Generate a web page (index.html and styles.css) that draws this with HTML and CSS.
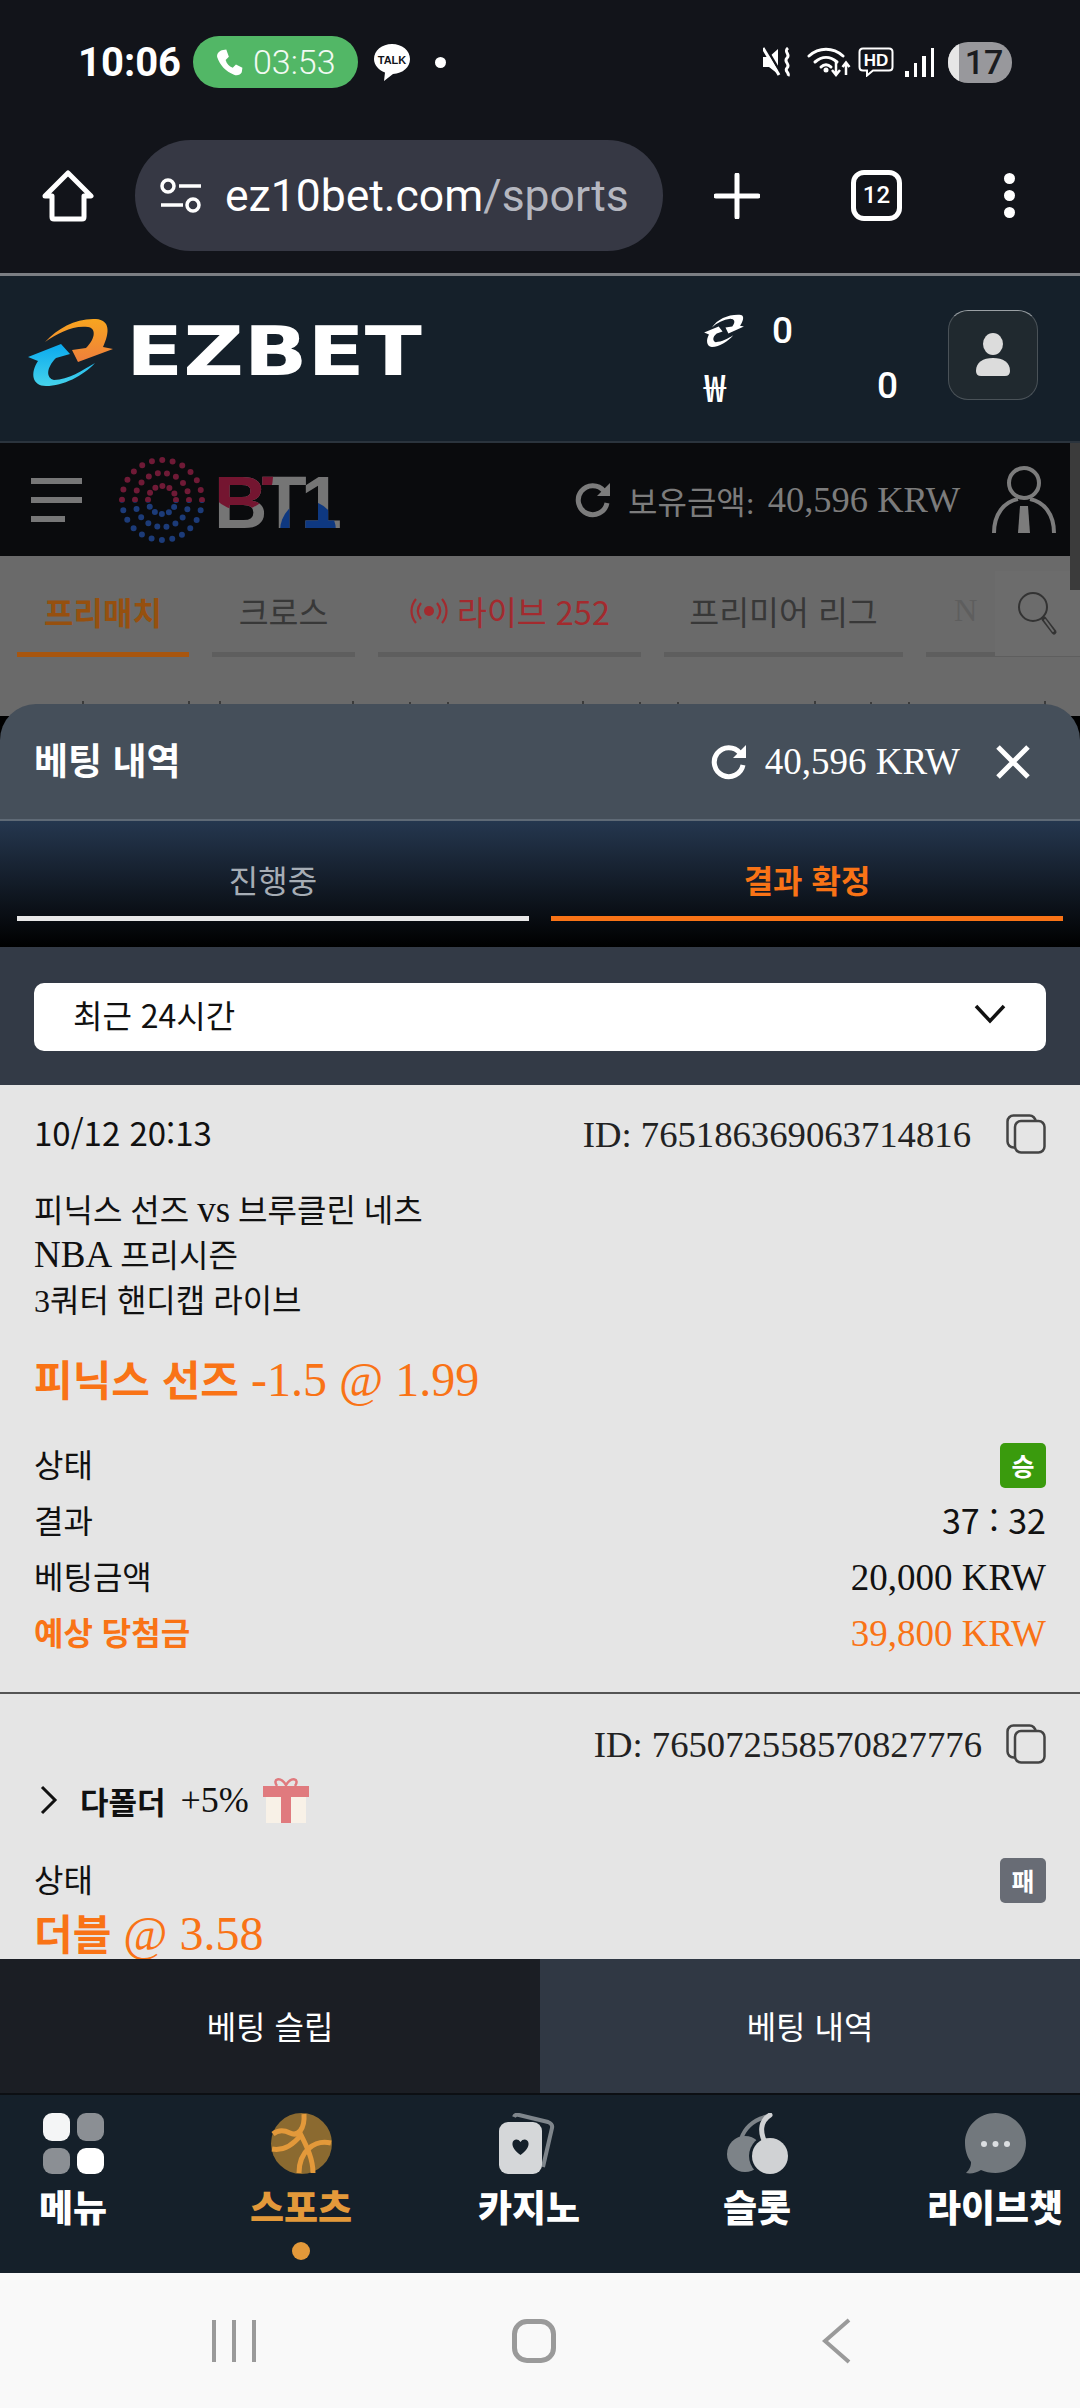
FILE: index.html
```html
<!DOCTYPE html>
<html lang="ko">
<head>
  <meta charset="UTF-8">
  <meta name="viewport" content="width=device-width, initial-scale=1.0">
  <title>EZBET - 베팅 내역</title>
  <link rel="stylesheet" href="styles.css">
</head>
<body>
<div class="phone">

  <!-- Android status bar -->
  <div class="status">
    <div class="status-left">
      <span class="clock">10:06</span>
      <span class="call-pill">
        <svg class="call-icon" viewBox="0 0 24 24"><path d="M6 2.5 L9.5 2 L11.5 7.5 L9 10 C10 13 11.5 14.800 14.500 16 L17 13.500 L22 16 L21.500 19.500 C20.500 21.500 18 22.500 15.500 21.500 C9 19 4.500 14 2.500 8 C2 5.500 3.500 3.500 6 2.500Z" fill="#fff"/></svg>
        <span>03:53</span>
      </span>
      <svg class="talk-icon" viewBox="0 0 38 38"><path d="M19 1 C29 1 37 7.500 37 16 C37 24 30 30.500 20 31 L11 38 L12 29.500 C5.500 27 1 22 1 16 C1 7.500 9 1 19 1Z" fill="#fff"/><text x="19" y="20.500" text-anchor="middle" class="talk-text">TALK</text></svg>
      <span class="status-dot"></span>
    </div>
    <div class="status-right">
      <svg class="mute-icon" viewBox="0 0 30 30"><path d="M0 10 H6 L15 2 V27 L6 20 H0Z" fill="#fff"/><path d="M3 1 L19 28" stroke="#12141a" stroke-width="2.500"/><path d="M0 1 L16 28" stroke="#fff" stroke-width="3"/><path d="M25 1 C20 5 28 7 24 11 C20 15 28 17 24 21 C21 24 27 26 25 29" fill="none" stroke="#fff" stroke-width="3"/></svg>
      <svg class="wifi-icon" viewBox="0 0 44 30"><g fill="none" stroke="#fff" stroke-width="3" stroke-linecap="round"><path d="M2 9 C12 0 26 0 36 9"/><path d="M8 15 C15 9 23 9 30 15"/><path d="M14 20 C17 17 21 17 24 20"/></g><circle cx="19" cy="23" r="2.500" fill="#fff"/><path d="M29 14 V27 M25 23 L29 28 L33 23 M39 28 V17 M35.500 20 L39 15.500 L42.500 20" fill="none" stroke="#fff" stroke-width="2.500"/></svg>
      <svg class="hd-icon" viewBox="0 0 36 30"><path d="M5 1.500 H31 Q34.500 1.500 34.500 5 V20 Q34.500 23.500 31 23.500 H15 L9 28.500 V23.500 H5 Q1.500 23.500 1.500 20 V5 Q1.500 1.500 5 1.500Z" fill="none" stroke="#fff" stroke-width="2"/><text x="18" y="18.500" text-anchor="middle" class="hd-text">HD</text></svg>
      <div class="signal"><i class="s1"></i><i class="s2"></i><i class="s3"></i><i class="s4"></i></div>
      <div class="battery"><span class="battery-fill"></span><span class="battery-num">17</span></div>
    </div>
  </div>

  <!-- Browser toolbar -->
  <div class="browser">
    <svg class="home-icon" viewBox="0 0 52 52"><path d="M26 3 L49 26 H42 V47 Q42 49 40 49 H12 Q10 49 10 47 V26 H3Z" fill="none" stroke="#fff" stroke-width="5" stroke-linejoin="round"/></svg>
    <div class="url-pill">
      <svg class="tune-icon" viewBox="0 0 42 36"><g fill="none" stroke="#fff" stroke-width="3.500"><circle cx="8" cy="8" r="6"/><circle cx="33" cy="27" r="6"/><path d="M19 8 H41 M1 27 H23"/></g></svg>
      <span class="url-text">ez10bet.com<span class="url-path">/sports</span></span>
    </div>
    <svg class="plus-icon" viewBox="0 0 46 46"><path d="M23 2 V44 M2 23 H44" stroke="#fff" stroke-width="5" stroke-linecap="round"/></svg>
    <div class="tab-count">12</div>
    <div class="kebab"><i></i><i></i><i></i></div>
  </div>

  <!-- Site header -->
  <div class="site-head">
    <div class="brand">
      <svg class="brand-mark" viewBox="0 0 85 68">
        <defs>
          <linearGradient id="ezOrange" x1="0" y1="0" x2="0" y2="1"><stop offset="0" stop-color="#f8a51f"/><stop offset="1" stop-color="#ee7f3c"/></linearGradient>
          <linearGradient id="ezBlue" x1="0" y1="0" x2="0" y2="1"><stop offset="0" stop-color="#0aa9ee"/><stop offset="1" stop-color="#45d3ec"/></linearGradient>
        </defs>
        <path d="M17 24 C30 10 48 0 68 1 C82 2 82 14 75 29 L85 31 L50 44 L44 32 L58 30 C68 20 68 10 60 9 C45 7 30 15 17 24Z" fill="url(#ezOrange)"/>
        <path d="M0 39 L33 26 L42 36 L28 40 C18 50 18 60 26 62 C40 62 55 52 67 45 C55 58 35 68 18 68 C4 68 2 55 10 43Z" fill="url(#ezBlue)"/>
      </svg>
      <span class="brand-name">EZBET</span>
    </div>
    <div class="wallet">
      <div class="wallet-row">
        <svg class="coin-icon" viewBox="0 0 42 34"><path d="M8 14 C14 5 26 0 38 1 C42 2 40 8 37 12 L41 13 L25 20 L22 14 L29 13 C33 8 31 5 27 5 C20 6 13 9 8 14Z" fill="#fff"/><path d="M0 19 L15 13 L19 18 L13 20 C8 24 9 28 12 29 C18 29 25 25 30 22 C25 28 16 34 8 34 C2 33 2 26 5 21Z" fill="#fff"/></svg>
        <span class="wallet-num coin-num">0</span>
      </div>
      <div class="wallet-row">
        <span class="won">₩</span>
        <span class="wallet-num won-num">0</span>
      </div>
    </div>
    <div class="profile-btn">
      <svg viewBox="0 0 36 44"><ellipse cx="18" cy="11" rx="10" ry="11" fill="#dcdcdc"/><path d="M1 38 C1 29 8 25 18 25 C28 25 35 29 35 38 Q35 43 30 43 H6 Q1 43 1 38Z" fill="#dcdcdc"/></svg>
    </div>
  </div>

  <!-- Page header behind the sheet -->
  <div class="bt-head">
    <div class="burger"><i></i><i></i><i class="short"></i></div>
    <svg class="bt-logo" viewBox="0 0 230 90">
      <defs>
        <clipPath id="dotsTop"><rect x="0" y="0" width="90" height="47"/></clipPath>
        <clipPath id="dotsBottom"><rect x="0" y="47" width="90" height="43"/></clipPath>
        <clipPath id="btRed"><circle cx="122" cy="22" r="33"/></clipPath>
        <clipPath id="btBlue"><ellipse cx="190" cy="76" rx="28" ry="30"/></clipPath>
      </defs>
      <g clip-path="url(#dotsTop)" fill="none" stroke="#6f1a36" stroke-width="6" stroke-linecap="round">
        <circle cx="44" cy="45" r="40" stroke-dasharray="0 10.470"/>
        <circle cx="44" cy="45" r="27" stroke-dasharray="0 9.420"/>
        <circle cx="44" cy="45" r="14" stroke-dasharray="0 7.330"/>
      </g>
      <g clip-path="url(#dotsBottom)" fill="none" stroke="#1c3b78" stroke-width="6" stroke-linecap="round">
        <circle cx="44" cy="45" r="40" stroke-dasharray="0 10.470"/>
        <circle cx="44" cy="45" r="27" stroke-dasharray="0 9.420"/>
        <circle cx="44" cy="45" r="14" stroke-dasharray="0 7.330"/>
      </g>
      <text x="96" y="73" class="bt-word" fill="#757575">BT1</text>
      <text x="96" y="73" class="bt-word" fill="#741530" clip-path="url(#btRed)">BT1</text>
      <text x="96" y="73" class="bt-word" fill="#0e3880" clip-path="url(#btBlue)">BT1</text>
    </svg>
    <div class="bt-balance">
      <svg class="refresh-icon" viewBox="0 0 36 36"><path d="M29 9 A14.500 14.500 0 1 0 32 21" fill="none" stroke="#7c7c7c" stroke-width="5"/><path d="M35 1 V14 H22Z" fill="#7c7c7c"/></svg>
      <span class="bt-label">보유금액:</span>
      <span class="bt-amount">40,596 KRW</span>
    </div>
    <svg class="agent-icon" viewBox="0 0 64 68"><g fill="none" stroke="#7c7c7c" stroke-width="4"><ellipse cx="32" cy="17" rx="15" ry="15"/><path d="M2 67 C2 48 12 36 26 33 M62 67 C62 48 52 36 38 33"/></g><path d="M28 40 H36 L38 67 H26Z" fill="#7c7c7c"/></svg>
  </div>

  <div class="dim">
    <div class="match-tabs">
      <div class="match-tab on w-pre">프리매치</div>
      <div class="match-tab w-cross">크로스</div>
      <div class="match-tab live w-live">
        <svg class="live-icon" viewBox="0 0 40 30"><circle cx="20" cy="15" r="5" fill="#a32a2e"/><g fill="none" stroke="#a32a2e" stroke-width="2.200"><path d="M12 7 C8 12 8 18 12 23 M28 7 C32 12 32 18 28 23 M7 3 C1 10 1 20 7 27 M33 3 C39 10 39 20 33 27"/></g></svg>
        라이브 252
      </div>
      <div class="match-tab w-prem">프리미어 리그</div>
      <div class="match-tab w-more"><span class="faint">N</span></div>
    </div>
    <div class="search-box">
      <svg viewBox="0 0 42 46"><circle cx="16" cy="16" r="14" fill="none" stroke="#333" stroke-width="2"/><path d="M27 28 L37 41" stroke="#333" stroke-width="5" stroke-linecap="round"/><path d="M28 29 L36 40" stroke="#6c6c6c" stroke-width="2" stroke-linecap="round"/></svg>
    </div>
    <svg class="clip-ticks" viewBox="0 0 1080 4"><path d="M83 0V4 M189 0V4 M220 0V4 M353 0V4 M410 1V4 M448 1V4 M583 0V4 M640 1V4 M678 1V4 M815 0V4 M871 1V4 M909 1V4 M1045 0V4" stroke="#2e2e2e" stroke-width="1.500"/></svg>
  </div>

  <div class="page-scroll"></div>

  <!-- Betting history sheet -->
  <div class="sheet">
    <div class="sheet-head">
      <span class="sheet-title">베팅 내역</span>
      <div class="sheet-balance">
        <svg class="refresh-icon" viewBox="0 0 36 36"><path d="M29 9 A14.500 14.500 0 1 0 32 21" fill="none" stroke="#fff" stroke-width="5"/><path d="M35 1 V14 H22Z" fill="#fff"/></svg>
        <span>40,596 KRW</span>
      </div>
      <svg class="close-icon" viewBox="0 0 34 34"><path d="M2 2 L32 32 M32 2 L2 32" stroke="#fff" stroke-width="5"/></svg>
    </div>

    <div class="sheet-tabs">
      <div class="sheet-tab">진행중</div>
      <div class="sheet-tab active">결과 확정</div>
    </div>

    <div class="filter">
      <div class="select">
        <span class="select-label">최근 24시간</span>
        <svg viewBox="0 0 32 20"><path d="M2 2 L16 17 L30 2" fill="none" stroke="#111" stroke-width="3.500"/></svg>
      </div>
    </div>

    <div class="list">
      <div class="bet first">
        <div class="bet-top">
          <span class="bet-date">10/12 20:13</span>
          <div class="bet-id">
            <span>ID: 765186369063714816</span>
            <svg class="copy-icon" viewBox="0 0 40 40"><rect x="1.500" y="1.500" width="28" height="32" rx="6" fill="none" stroke="#444" stroke-width="2.500"/><rect x="9" y="7" width="29.500" height="31.500" rx="6" fill="#e5e5e5" stroke="#444" stroke-width="2.500"/></svg>
          </div>
        </div>
        <div class="bet-match">
          <div class="match-line">피닉스 선즈 <span class="lat">vs</span> 브루클린 네츠</div>
          <div class="match-line"><span class="lat">NBA</span> 프리시즌</div>
          <div class="match-line">3쿼터 핸디캡 라이브</div>
        </div>
        <div class="bet-pick"><b>피닉스 선즈</b> -1.5 @ 1.99</div>
        <div class="bet-rows">
          <div class="bet-row"><span class="row-label">상태</span><span class="badge win">승</span></div>
          <div class="bet-row"><span class="row-label">결과</span><span class="score">37 : 32</span></div>
          <div class="bet-row"><span class="row-label">베팅금액</span><span class="lat">20,000 KRW</span></div>
          <div class="bet-row hi"><b class="row-label">예상 당첨금</b><span class="lat">39,800 KRW</span></div>
        </div>
      </div>

      <div class="bet">
        <div class="bet-top end">
          <div class="bet-id wide">
            <span>ID: 765072558570827776</span>
            <svg class="copy-icon" viewBox="0 0 40 40"><rect x="1.500" y="1.500" width="28" height="32" rx="6" fill="none" stroke="#444" stroke-width="2.500"/><rect x="9" y="7" width="29.500" height="31.500" rx="6" fill="#e5e5e5" stroke="#444" stroke-width="2.500"/></svg>
          </div>
        </div>
        <div class="multi">
          <svg class="multi-chev" viewBox="0 0 18 30"><path d="M2 2 L15 15 L2 28" fill="none" stroke="#111" stroke-width="3"/></svg>
          <b>다폴더</b>
          <span class="bonus">+5%</span>
          <svg class="gift-icon" viewBox="0 0 46 46"><path d="M14 9 C9 2 17 -1 23 8 C29 -1 37 2 32 9" fill="none" stroke="#e07a7e" stroke-width="2.500"/><rect x="0" y="9" width="46" height="11" fill="#e07a7e"/><rect x="3" y="20" width="40" height="26" fill="#f8f1e7"/><rect x="18" y="9" width="10" height="37" fill="#e07a7e"/></svg>
        </div>
        <div class="bet-rows tight">
          <div class="bet-row"><span class="row-label">상태</span><span class="badge lose">패</span></div>
        </div>
        <div class="bet-pick small"><b>더블</b> @ 3.58</div>
      </div>
    </div>

    <div class="foot-tabs">
      <div class="foot-tab">베팅 슬립</div>
      <div class="foot-tab current">베팅 내역</div>
    </div>
  </div>

  <!-- Site bottom nav -->
  <div class="bottom-nav">
    <div class="nav-item">
      <svg class="nav-icon" viewBox="0 0 61 61"><rect x="0" y="0" width="27" height="28" rx="9" fill="#f4f5f6"/><rect x="34" y="0" width="27" height="28" rx="9" fill="#8b8f94"/><rect x="0" y="35" width="27" height="26" rx="9" fill="#8b8f94"/><rect x="34" y="35" width="27" height="26" rx="9" fill="#fff"/></svg>
      <span>메뉴</span>
    </div>
    <div class="nav-item on">
      <svg class="nav-icon" viewBox="0 0 61 61"><circle cx="30.500" cy="30.500" r="30.500" fill="#8b6a30"/><g fill="none" stroke="#e3993a" stroke-width="5"><path d="M33 1 C34 16 27 24 19 20 C13 17 7 17 2 21"/><path d="M1 36 C12 38 22 32 30 22 C36 34 42 46 42 60"/><path d="M60 30 C44 26 28 38 28 60"/></g></svg>
      <span>스포츠</span>
      <i class="nav-dot"></i>
    </div>
    <div class="nav-item">
      <svg class="nav-icon" viewBox="0 0 61 61"><path d="M15 4 Q16 1 20 2 L49 9 Q54 11 53 15 L44 54" fill="none" stroke="#7f868c" stroke-width="4"/><rect x="0" y="9" width="43" height="52" rx="9" fill="#d5d7d9"/><path d="M21.500 42 C16 38 13 34 13.500 30 C14 26 19 25 21.500 29 C24 25 29 26 29.500 30 C30 34 27 38 21.500 42Z" fill="#15202a"/></svg>
      <span>카지노</span>
    </div>
    <div class="nav-item">
      <svg class="nav-icon" viewBox="0 0 61 61"><path d="M42 3 C28 6 18 14 14 26" fill="none" stroke="#7d8388" stroke-width="4"/><circle cx="18" cy="41" r="18" fill="#7d8388"/><circle cx="43" cy="43" r="21" fill="#15202a"/><circle cx="43" cy="43" r="18" fill="#d0d2d4"/><path d="M43 2 C33 8 32 20 40 33" fill="none" stroke="#d0d2d4" stroke-width="5" stroke-linecap="round"/></svg>
      <span>슬롯</span>
    </div>
    <div class="nav-item last">
      <svg class="nav-icon" viewBox="0 0 61 61"><path d="M30.500 0 C47 0 61 13 61 30 C61 47 47 60 30.500 60 C25 60 20 59 16 57 C11 60 6 61 1 60 C5 56 6 53 6 49 C2 44 0 37 0 30 C0 13 14 0 30.500 0Z" fill="#72787d"/><circle cx="19" cy="31" r="3" fill="#dcdfe2"/><circle cx="30.500" cy="31" r="3" fill="#dcdfe2"/><circle cx="42" cy="31" r="3" fill="#dcdfe2"/></svg>
      <span>라이브챗</span>
    </div>
  </div>

  <!-- Android nav bar -->
  <div class="sys-nav">
    <div class="recents"><i></i><i></i><i></i></div>
    <div class="sys-home"></div>
    <svg class="sys-back" viewBox="0 0 30 46"><path d="M27 2 L3 23 L27 44" fill="none" stroke="#9a9a9a" stroke-width="4"/></svg>
  </div>

</div>
</body>
</html>
```

FILE: styles.css
```css
/* Basic Styles */
* {
  box-sizing: border-box;
}

body {
  margin: 0;
  padding: 0;
  background-color: #000;
}

i {
  display: block;
}

svg {
  display: block;
  flex-shrink: 0;
}

.phone {
  position: relative;
  width: 1080px;
  height: 2408px;
  display: flex;
  flex-direction: column;
  overflow: hidden;
  font-family: "Noto Sans CJK KR", sans-serif;
}

/* Status bar */
.status {
  height: 124px;
  flex-shrink: 0;
  background-color: #12141a;
  display: flex;
  align-items: center;
  justify-content: space-between;
  padding: 0 68px 0 78px;
}

.status-left,
.status-right {
  display: flex;
  align-items: center;
}

.clock {
  font-family: Roboto, sans-serif;
  font-weight: 700;
  font-size: 40px;
  color: #fff;
  width: 115px;
}

.call-pill {
  width: 165px;
  height: 52px;
  border-radius: 26px;
  background-color: #52b766;
  display: flex;
  align-items: center;
  padding-left: 21px;
  gap: 8px;
  font-family: Roboto, sans-serif;
  font-weight: 300;
  font-size: 34px;
  color: #f2faf3;
}

.call-icon {
  width: 31px;
  height: 31px;
}

.talk-icon {
  width: 38px;
  height: 38px;
  margin-left: 15px;
}

.talk-text {
  font-family: "Liberation Sans", sans-serif;
  font-size: 11px;
  font-weight: 700;
  fill: #12141a;
}

.status-dot {
  width: 11px;
  height: 11px;
  border-radius: 50%;
  background-color: #fff;
  margin-left: 24px;
}

.mute-icon {
  width: 30px;
  height: 30px;
}

.wifi-icon {
  width: 44px;
  height: 30px;
  margin-left: 14px;
}

.hd-icon {
  width: 36px;
  height: 30px;
  margin-left: 7px;
}

.hd-text {
  font-family: "Liberation Sans", sans-serif;
  font-size: 17px;
  font-weight: 700;
  fill: #fff;
}

.signal {
  display: flex;
  align-items: flex-end;
  gap: 5px;
  height: 30px;
  margin-left: 11px;
}

.signal i {
  width: 3.500px;
  background-color: #fff;
}

.s1 { height: 6px; }
.s2 { height: 14px; }
.s3 { height: 21px; }
.s4 { height: 29px; }

.battery {
  position: relative;
  width: 64px;
  height: 41px;
  border-radius: 20px;
  margin-left: 14px;
  background-color: #98989c;
  overflow: hidden;
  text-align: center;
}

.battery-fill {
  position: absolute;
  left: 0;
  top: 0;
  bottom: 0;
  width: 11px;
  background-color: #e6e6e6;
}

.battery-num {
  position: relative;
  left: 4px;
  font-family: Roboto, sans-serif;
  font-size: 34px;
  font-weight: 500;
  line-height: 41px;
  color: #1b1c20;
}

/* Browser toolbar */
.browser {
  height: 152px;
  flex-shrink: 0;
  background-color: #12141a;
  border-bottom: 3px solid #7b7e83;
  display: flex;
  align-items: center;
  padding-left: 42px;
  padding-bottom: 6px;
}

.home-icon {
  width: 52px;
  height: 52px;
}

.url-pill {
  width: 528px;
  height: 111px;
  border-radius: 56px;
  margin-left: 41px;
  background-color: #363844;
  display: flex;
  align-items: center;
  padding-left: 25px;
  gap: 23px;
}

.tune-icon {
  width: 42px;
  height: 36px;
}

.url-text {
  font-family: Roboto, sans-serif;
  font-size: 44.500px;
  color: #fff;
  white-space: nowrap;
}

.url-path {
  color: #b5b7c0;
}

.plus-icon {
  width: 46px;
  height: 46px;
  margin-left: 51px;
}

.tab-count {
  width: 51px;
  height: 51px;
  border: 5px solid #fff;
  border-radius: 13px;
  margin-left: 91px;
  font-family: Roboto, sans-serif;
  font-weight: 500;
  font-size: 24px;
  line-height: 41px;
  text-align: center;
  color: #fff;
}

.kebab {
  margin-left: 102px;
  display: flex;
  flex-direction: column;
  gap: 6px;
}

.kebab i {
  width: 11px;
  height: 11px;
  border-radius: 50%;
  background-color: #fff;
}

/* Site header */
.site-head {
  height: 167px;
  flex-shrink: 0;
  background-color: #15202a;
  border-bottom: 2px solid #2b343d;
  display: flex;
  align-items: center;
  position: relative;
  padding-left: 28px;
}

.brand {
  display: flex;
  align-items: center;
  width: 394px;
  margin-top: -14px;
}

.brand-mark {
  width: 85px;
  height: 68px;
}

.brand-name {
  font-family: "DejaVu Sans", sans-serif;
  font-weight: 700;
  font-size: 68px;
  line-height: 68px;
  color: #fff;
  margin-left: 13px;
  transform: scaleX(1.23);
  transform-origin: left center;
}

.wallet {
  width: 194px;
  margin-left: 282px;
  margin-top: -2px;
  display: flex;
  flex-direction: column;
  gap: 13px;
}

.wallet-row {
  display: flex;
  align-items: center;
  height: 42px;
  justify-content: flex-start;
}

.coin-icon {
  width: 41px;
  height: 33px;
}

.wallet-num {
  font-family: Roboto, sans-serif;
  font-weight: 500;
  font-size: 37px;
  color: #fff;
}

.coin-num {
  margin-left: 27px;
}

.won {
  width: 36px;
  font-family: "Noto Sans CJK KR", sans-serif;
  font-weight: 500;
  font-size: 38px;
  color: #fff;
}

.won-num {
  margin-left: auto;
}

.profile-btn {
  width: 90px;
  height: 90px;
  margin-left: 50px;
  margin-top: -7px;
  border-radius: 20px;
  background-color: #20292f;
  border: 1px solid #4a5258;
  border-top-color: #9aa0a4;
  display: flex;
  align-items: center;
  justify-content: center;
}

.profile-btn svg {
  width: 40px;
  height: 44px;
}

/* Page behind the sheet */
.bt-head {
  height: 113px;
  flex-shrink: 0;
  background-color: #0a0b0d;
  display: flex;
  align-items: center;
  padding-left: 31px;
}

.burger {
  width: 51px;
  display: flex;
  flex-direction: column;
  gap: 13px;
}

.burger i {
  height: 6px;
  background-color: #777;
}

.burger .short {
  width: 34px;
}

.bt-logo {
  width: 230px;
  height: 90px;
  margin-left: 36px;
}

.bt-word {
  font-family: "Liberation Sans", sans-serif;
  font-weight: 700;
  font-size: 74px;
  letter-spacing: -6px;
}

.bt-balance {
  display: flex;
  align-items: center;
  margin-left: 227px;
  width: 392px;
  font-family: "Liberation Serif", "Noto Sans CJK KR", serif;
  font-size: 37px;
  color: #7c7c7c;
  white-space: nowrap;
}

.bt-balance .refresh-icon {
  margin-right: 17px;
}

.bt-label {
  font-size: 32px;
}

.bt-amount {
  margin-left: 13px;
  font-size: 36.500px;
}

.refresh-icon {
  width: 36px;
  height: 36px;
}

.agent-icon {
  width: 64px;
  height: 68px;
  margin-left: 25px;
}

.dim {
  height: 160px;
  margin-bottom: -12px;
  flex-shrink: 0;
  background-color: #6a6a6a;
  position: relative;
  overflow: hidden;
}

.match-tabs {
  display: flex;
  gap: 23px;
  padding: 32px 0 0 17px;
}

.match-tab {
  height: 69px;
  flex-shrink: 0;
  border-bottom: 5px solid #5e5e5e;
  display: flex;
  align-items: center;
  justify-content: center;
  gap: 8px;
  font-size: 32.500px;
  padding-bottom: 19px;
  color: #383838;
  white-space: nowrap;
}

.match-tab.on {
  color: #96500f;
  font-weight: 700;
  border-bottom-color: #a8560f;
  font-size: 32px;
}

.match-tab.live {
  color: #a32a2e;
}

.w-pre { width: 172px; }
.w-cross { width: 143px; }
.w-live { width: 263px; }
.w-prem { width: 239px; }
.w-more { width: 160px; justify-content: flex-start; padding-left: 28px; }

.faint {
  color: #5e5e5e;
  font-family: "Liberation Serif", serif;
}

.live-icon {
  width: 40px;
  height: 30px;
}

.search-box {
  position: absolute;
  right: 0;
  top: 15px;
  width: 85px;
  height: 85px;
  background-color: #6c6c6c;
  display: flex;
  align-items: center;
  justify-content: center;
}

.search-box svg {
  width: 42px;
  height: 46px;
}

.clip-ticks {
  position: absolute;
  left: 0;
  top: 145px;
  width: 1080px;
  height: 4px;
}

.page-scroll {
  position: absolute;
  right: 0;
  top: 443px;
  width: 10px;
  height: 147px;
  background-color: #3b3b3b;
}

/* Sheet */
.sheet {
  position: relative;
  flex: 1;
  min-height: 0;
  display: flex;
  flex-direction: column;
  border-radius: 36px 36px 0 0;
  overflow: hidden;
}

.sheet-head {
  height: 117px;
  flex-shrink: 0;
  background-color: #454f5a;
  border-bottom: 2px solid #5f6a76;
  display: flex;
  align-items: center;
  padding: 0 50px 0 34px;
  color: #fff;
}

.sheet-title {
  font-weight: 700;
  font-size: 37px;
  margin-bottom: 6px;
}

.sheet-balance {
  margin-left: auto;
  display: flex;
  align-items: center;
  gap: 18px;
  font-family: "Liberation Serif", serif;
  font-size: 37px;
}

.close-icon {
  width: 34px;
  height: 34px;
  margin-left: 36px;
}

.sheet-tabs {
  height: 126px;
  flex-shrink: 0;
  background: linear-gradient(#25374f, #000);
  display: flex;
  gap: 22px;
  padding: 0 17px;
}

.sheet-tab {
  flex: 1;
  height: 100px;
  border-bottom: 5px solid #e8e8e8;
  display: flex;
  align-items: center;
  justify-content: center;
  padding-top: 20px;
  font-size: 32px;
  color: #a6adb5;
}

.sheet-tab.active {
  border-bottom-color: #f97316;
  color: #f97316;
  font-weight: 700;
}

.filter {
  height: 138px;
  flex-shrink: 0;
  background-color: #333a46;
  padding: 36px 34px 0;
}

.select {
  height: 68px;
  border-radius: 10px;
  background-color: #fff;
  display: flex;
  align-items: center;
  justify-content: space-between;
  padding: 0 40px 0 39px;
  font-size: 32px;
  color: #111;
}

.select-label {
  margin-bottom: 6px;
}

.select svg {
  width: 32px;
  height: 20px;
  margin-bottom: 6px;
}

.list {
  flex: 1;
  min-height: 0;
  overflow: hidden;
  background-color: #e5e5e5;
  font-family: "Liberation Serif", "Noto Sans CJK KR", serif;
  color: #111;
}

.bet {
  padding: 30px 34px 0;
}

.bet.first {
  padding-top: 29px;
  height: 609px;
  border-bottom: 2px solid #555;
}

.bet-top {
  display: flex;
  align-items: center;
  justify-content: space-between;
  height: 40px;
}

.bet-top.end {
  justify-content: flex-end;
}

.bet-date {
  font-family: "Noto Sans CJK KR", sans-serif;
  font-size: 33px;
  margin-bottom: 4px;
}

.bet-id {
  display: flex;
  align-items: center;
  gap: 35px;
  font-size: 36.700px;
  color: #222;
}

.bet-id.wide {
  gap: 24px;
}

.copy-icon {
  width: 40px;
  height: 40px;
}

.bet-match {
  margin-top: 35px;
  font-size: 32px;
}

.match-line {
  height: 45px;
  line-height: 45px;
  overflow: visible;
}

.lat {
  font-size: 37px;
  line-height: 1;
}

.bet-pick {
  margin-top: 30px;
  height: 60px;
  font-size: 48px;
  line-height: 52px;
  color: #f97316;
}

.bet-pick b {
  font-family: "Noto Sans CJK KR", sans-serif;
  font-weight: 700;
  font-size: 42px;
  line-height: 1;
}

.bet-pick.small {
  margin-top: 0;
}

.bet-rows {
  margin-top: 23px;
  font-size: 32px;
}

.bet-rows.tight {
  margin-top: 27px;
}

.bet-row {
  height: 56px;
  display: flex;
  align-items: center;
  justify-content: space-between;
}

.row-label {
  padding-bottom: 5px;
}

.bet-row.hi {
  color: #f97316;
}

.bet-row b {
  font-family: "Noto Sans CJK KR", sans-serif;
  font-weight: 700;
}

.score {
  font-family: "Noto Sans CJK KR", sans-serif;
  font-size: 34px;
  padding-bottom: 3px;
}

.badge {
  width: 46px;
  height: 45px;
  border-radius: 5px;
  display: flex;
  align-items: center;
  justify-content: center;
  font-family: "Noto Sans CJK KR", sans-serif;
  font-weight: 700;
  font-size: 25px;
  color: #fff;
}

.badge.win {
  background-color: #3a9b0d;
}

.badge.lose {
  background-color: #686c75;
}

.multi {
  margin-top: 11px;
  height: 50px;
  display: flex;
  align-items: center;
  padding-left: 6px;
  font-size: 36px;
}

.multi b {
  font-family: "Noto Sans CJK KR", sans-serif;
  font-weight: 700;
  font-size: 31px;
  margin-left: 22px;
}

.multi-chev {
  width: 18px;
  height: 30px;
}

.bonus {
  margin-left: 15px;
}

.gift-icon {
  width: 46px;
  height: 46px;
  margin-left: 14px;
}

.foot-tabs {
  height: 134px;
  flex-shrink: 0;
  display: flex;
  background-color: #1b1e24;
}

.foot-tab {
  flex: 1;
  display: flex;
  align-items: center;
  justify-content: center;
  font-size: 32px;
  color: #fff;
  padding-bottom: 3px;
}

.foot-tab.current {
  background-color: #303844;
}

/* Bottom nav */
.bottom-nav {
  height: 180px;
  flex-shrink: 0;
  background-color: #15202a;
  border-top: 2px solid #0c0f13;
  display: flex;
  gap: 82px;
  padding-top: 18px;
}

.nav-item {
  position: relative;
  width: 146px;
  display: flex;
  flex-direction: column;
  align-items: center;
  font-weight: 900;
  font-size: 37px;
  line-height: 50px;
  color: #fff;
}

.nav-item.last {
  width: 166px;
}

.nav-item span {
  margin-top: 7px;
}

.nav-item.on {
  color: #e3993a;
}

.nav-icon {
  width: 61px;
  height: 61px;
}

.nav-dot {
  width: 18px;
  height: 18px;
  border-radius: 50%;
  background-color: #e3993a;
  margin-top: 11px;
}

/* Android nav bar */
.sys-nav {
  height: 135px;
  flex-shrink: 0;
  background-color: #f9f9f9;
  display: flex;
  align-items: center;
  padding-left: 212px;
}

.recents {
  display: flex;
  gap: 16px;
}

.recents i {
  width: 4px;
  height: 42px;
  background-color: #9a9a9a;
}

.sys-home {
  width: 44px;
  height: 44px;
  margin-left: 256px;
  border: 5px solid #9a9a9a;
  border-radius: 15px;
}

.sys-back {
  width: 30px;
  height: 46px;
  margin-left: 266px;
}
```
